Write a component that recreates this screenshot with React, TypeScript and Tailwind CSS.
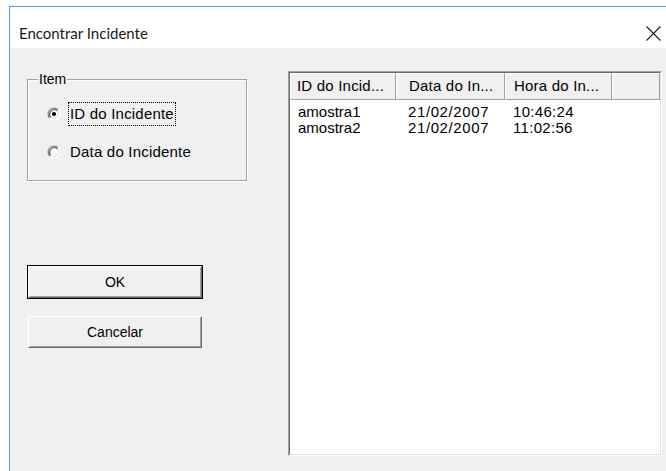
const colunas = [
  { titulo: 'ID do Incid...', largura: 'w-[106px]', recuo: 'pl-[6px]' },
  { titulo: 'Data do In...', largura: 'w-[109px]', recuo: 'pl-[12px]' },
  { titulo: 'Hora do In...', largura: 'w-[107px]', recuo: 'pl-[8px]' },
]

const incidentes = [
  { id: 'amostra1', data: '21/02/2007', hora: '10:46:24' },
  { id: 'amostra2', data: '21/02/2007', hora: '11:02:56' },
]

const fonteClassica = { fontFamily: '"Liberation Sans", Arial, sans-serif' }

function Radio({ marcado }: { marcado?: boolean }) {
  return (
    <svg className="shrink-0" width="14" height="14" viewBox="0 0 14 14">
      <circle cx="7" cy="7" r="6" fill="#ffffff" />
      <path d="M11.24 2.76 A6 6 0 0 0 2.76 11.24" fill="none" stroke="#8c8c8c" strokeWidth="1.3" />
      <path d="M10.3 3.7 A4.7 4.7 0 0 0 3.7 10.3" fill="none" stroke="#505050" strokeWidth="1.1" />
      <path d="M2.76 11.24 A6 6 0 0 0 11.24 2.76" fill="none" stroke="#ffffff" strokeWidth="1.3" />
      <path d="M3.7 10.3 A4.7 4.7 0 0 0 10.3 3.7" fill="none" stroke="#dcdcdc" strokeWidth="1.1" />
      {marcado && <circle cx="7" cy="7" r="2.1" fill="#000000" />}
    </svg>
  )
}

function Botao({ texto, padrao }: { texto: string; padrao?: boolean }) {
  return (
    <div className={padrao ? 'border border-black' : 'border border-transparent'}>
      <div className="border border-t-white border-l-white border-b-[#696969] border-r-[#696969]">
        <div className="h-[30px] flex items-center justify-center bg-[#f0f0f0] border border-t-[#f0f0f0] border-l-[#f0f0f0] border-b-[#a0a0a0] border-r-[#a0a0a0] text-[14px] text-black">
          {texto}
        </div>
      </div>
    </div>
  )
}

export default function App() {
  return (
    <div className="relative w-[666px] h-[471px] overflow-hidden bg-white pl-[9px] pt-[6px]">
      <div className="w-[700px] h-[500px] border-l border-t border-[#4d9be6] flex flex-col">
        {/* barra de titulo */}
        <div className="h-[41px] bg-white flex items-center pl-[9px] pt-[11px]">
          <span className="text-[15px] text-[#1a1a1a]" style={{ fontFamily: 'Lato, sans-serif' }}>
            Encontrar Incidente
          </span>
        </div>

        <div className="flex-1 bg-[#f0f0f0] flex pt-[18px]" style={fonteClassica}>
          {/* coluna esquerda */}
          <div className="w-[237px] pl-[17px] flex flex-col">
            <div className="relative mt-[13px] h-[102px] border border-[#a0a0a0] shadow-[inset_1px_1px_0_#ffffff,1px_1px_0_#ffffff]">
              <span className="absolute -top-[9px] left-[10px] bg-[#f0f0f0] px-[1px] text-[14px] leading-[16px] text-black">
                Item
              </span>
              <div className="flex flex-col pl-[19px] pt-[22px] gap-[15px] text-[15px] tracking-[0.2px] text-black">
                <div className="flex items-center gap-[7px]">
                  <Radio marcado />
                  <span className="border border-dotted border-black px-[1px] leading-[22px]">ID do Incidente</span>
                </div>
                <div className="flex items-center gap-[8px]">
                  <Radio />
                  <span className="leading-[22px] pl-[1px]">Data do Incidente</span>
                </div>
              </div>
            </div>

            <div className="mt-[84px] w-[176px] flex flex-col gap-[16px]">
              <Botao texto="OK" padrao />
              <Botao texto="Cancelar" />
            </div>
          </div>

          {/* lista de incidentes */}
          <div className="ml-[41px] mt-[5px] w-[374px] h-[385px] border border-t-[#a0a0a0] border-l-[#a0a0a0] border-b-white border-r-white">
            <div className="h-full border border-t-[#696969] border-l-[#696969] border-b-[#e3e3e3] border-r-[#e3e3e3] bg-white flex flex-col">
              <div className="flex h-[27px] shrink-0">
                {colunas.map((c) => (
                  <div
                    key={c.titulo}
                    className={`${c.largura} ${c.recuo} shrink-0 border border-t-white border-l-white border-b-[#a0a0a0] border-r-[#a0a0a0] shadow-[1px_0_0_#696969] bg-[#f0f0f0] flex items-center text-[15px] tracking-[0.2px] text-black`}
                  >
                    {c.titulo}
                  </div>
                ))}
                <div className="flex-1 border border-t-white border-l-white border-b-[#a0a0a0] border-r-[#a0a0a0] bg-[#f0f0f0]" />
              </div>
              <div className="pt-[4px]">
                {incidentes.map((i) => (
                  <div key={i.id} className="flex h-[16px] items-center text-[15px] text-black">
                    <span className="w-[106px] pl-[8px]">{i.id}</span>
                    <span className="w-[109px] pl-[12px] tracking-[0.6px]">{i.data}</span>
                    <span className="w-[107px] pl-[8px] tracking-[0.3px]">{i.hora}</span>
                  </div>
                ))}
              </div>
            </div>
          </div>
        </div>
      </div>

      {/* botao fechar */}
      <svg className="absolute left-[646px] top-[26px]" width="15" height="15" viewBox="0 0 15 15">
        <path d="M0.5 0.5 L14.5 14.5 M14.5 0.5 L0.5 14.5" stroke="#1a1a1a" strokeWidth="1.1" />
      </svg>
    </div>
  )
}
